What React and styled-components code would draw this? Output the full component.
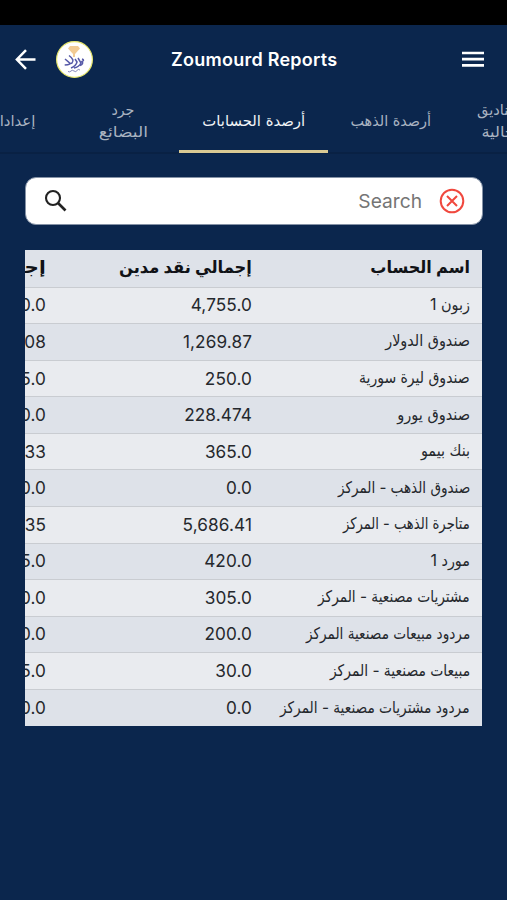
import React from "react";
import styled, { createGlobalStyle } from "styled-components";

const Global = createGlobalStyle`
  * { box-sizing: border-box; }
  body { margin: 0; background: #0b264d; }
`;

const arabic = `"DejaVu Sans Condensed", "DejaVu Sans", sans-serif`;

const Screen = styled.main`
  width: 507px;
  height: 900px;
  overflow: hidden;
  background: #0b264d;
  font-family: Inter, ${arabic};
`;
const StatusBar = styled.div`
  height: 25px;
  background: #000;
`;
const AppBar = styled.header`
  height: 69px;
  display: grid;
  grid-template-columns: 56px 37px 1fr 56px;
  align-items: center;
  color: #fff;
`;
const IconButton = styled.button`
  display: flex;
  justify-content: ${(p) => p.$justify || "center"};
  padding: 0 ${(p) => p.$end || 0}px 0 ${(p) => p.$start || 0}px;
  border: 0;
  background: none;
  color: inherit;
`;
const Logo = styled.svg`
  display: block;
  width: 37px;
  height: 37px;
`;
const Title = styled.h1`
  margin: 0;
  padding-left: 78px;
  font-size: 18px;
  font-weight: 600;
  letter-spacing: 0.25px;
  white-space: nowrap;
`;
const TabBar = styled.nav`
  direction: rtl;
  display: flex;
  height: 60px;
  margin-right: -46px;
  border-bottom: 2px solid #092144;
`;
const Tab = styled.button`
  flex: none;
  width: ${(p) => p.$width}px;
  height: 59px;
  padding: 0 0 3px;
  border: 0;
  border-bottom: 3px solid ${(p) => (p.$active ? "#d9c993" : "transparent")};
  background: none;
  color: ${(p) => (p.$active ? "#f2f4f7" : "#a9b3c1")};
  font: ${(p) => (p.$active ? 500 : 400)} 15px/22px ${arabic};
  white-space: nowrap;
`;
const Label = styled.span`
  display: inline-block;
  transform: scaleX(${(p) => p.$fit || 1});
  transform-origin: ${(p) => p.$origin || "right"} center;
`;
const SearchBox = styled.div`
  direction: rtl;
  display: flex;
  align-items: center;
  width: 458px;
  height: 48px;
  margin: 23px 0 25px 25px;
  padding: 0 17px 0 18px;
  border: 1px solid #8592a6;
  border-radius: 11px;
  background: #fff;
`;
const Placeholder = styled.span`
  flex: 1;
  padding-right: 17px;
  color: #757575;
  font-size: 19.2px;
`;
const Table = styled.section`
  direction: rtl;
  width: 457px;
  margin-left: 25px;
  overflow: hidden;
  color: #25282d;
`;
const Row = styled.div`
  display: grid;
  grid-template-columns: 218px 206px 206px;
  align-items: center;
  height: ${(p) => (p.$head ? 37.6 : 36.57)}px;
  border-bottom: 1px solid #c9ccd1;
  background: ${(p) => (p.$shaded ? "#dee2e9" : "#e9ebef")};
  &:last-child { border-bottom: 0; }
`;
const Cell = styled.div`
  padding: 0 12px 3px;
  white-space: nowrap;
  font: ${(p) => (p.$head ? 700 : 400)} ${(p) => (p.$head ? 17 : 16)}px/24px Inter, ${arabic};
  color: ${(p) => (p.$head ? "#101216" : "inherit")};
`;
const Amount = styled.div`
  padding: 0 12px;
  font-size: 17.2px;
  line-height: 24px;
  letter-spacing: 0.1px;
  white-space: nowrap;
`;

const tabs = [
  { lines: [["الصناديق", 1.08], ["الحالية", 1.2]], width: 100 },
  { lines: [["أرصدة الذهب", 1.067]], width: 125 },
  { lines: [["أرصدة الحسابات", 1.1]], width: 149, active: true },
  { lines: [["جرد", 1.05], ["البضائع", 1.27]], width: 112 },
  { lines: [["إعدادات", 1.1]], width: 112 },
];

const headings = [
  ["اسم الحساب", 1.05],
  ["إجمالي نقد مدين", 1.064],
  ["إجمالي نقد دائن", 1.3],
];

const rows = [
  ["زبون 1", "4,755.0", "0.0", 1],
  ["صندوق الدولار", "1,269.87", "08", 1],
  ["صندوق ليرة سورية", "250.0", "5.0", 0.974],
  ["صندوق يورو", "228.474", "0.0", 1.01],
  ["بنك بيمو", "365.0", "33", 1],
  ["صندوق الذهب - المركز", "0.0", "0.0", 0.943],
  ["متاجرة الذهب - المركز", "5,686.41", "35", 0.914],
  ["مورد 1", "420.0", "5.0", 1],
  ["مشتريات مصنعية - المركز", "305.0", "0.0", 0.956],
  ["مردود مبيعات مصنعية المركز", "200.0", "0.0", 0.948],
  ["مبيعات مصنعية - المركز", "30.0", "5.0", 0.966],
  ["مردود مشتريات مصنعية - المركز", "0.0", "0.0", 0.955],
];

export default function App() {
  return (
    <Screen>
      <Global />
      <StatusBar />
      <AppBar>
        <IconButton $justify="flex-start" $start={15} aria-label="Back">
          <svg width="21" height="21" viewBox="0 0 21 21" fill="none" stroke="currentColor" strokeWidth="2.5">
            <path d="M11 1.2 1.9 10.5 11 19.8M2 10.5h18.5" />
          </svg>
        </IconButton>
        <Logo viewBox="0 0 37 37" fill="none">
          <circle cx="18.5" cy="18.5" r="17.9" fill="#fff" stroke="#e6e56a" strokeWidth="1.2" />
          <path d="m12 7.5 2-2.5h8l2 2.5-5 5.5v3h-2v-3z" fill="#f2cb94" />
          <path d="m9 18 4 3.3q3 2.1-4.3 2.7M13 14.5q6 4.5 3 7.5l-3 1M19 18l2 3q-1 4-6 6M22 17l3 5q-2 4-7 5M26 18q3 1 0 2.5 2 2.5-2 4" stroke="#5659a8" strokeWidth="1.5" />
          <path d="M12 30.5q2 1 3-.5t3 0 3-.5 3-.5" stroke="#8889bd" strokeWidth="1" />
        </Logo>
        <Title>Zoumourd Reports</Title>
        <IconButton $justify="flex-end" $end={23} aria-label="Menu">
          <svg width="22" height="17" viewBox="0 0 22 17" stroke="currentColor" strokeWidth="2.7">
            <path d="M0 2h22M0 8.2h22M0 14.4h22" />
          </svg>
        </IconButton>
      </AppBar>
      <TabBar>
        {tabs.map((t) => (
          <Tab key={t.lines[0][0]} $width={t.width} $active={t.active}>
            {t.lines.map(([text, fit], i) => (
              <React.Fragment key={text}>
                {i > 0 && <br />}
                <Label $origin="center" $fit={fit}>{text}</Label>
              </React.Fragment>
            ))}
          </Tab>
        ))}
      </TabBar>
      <SearchBox>
        <svg width="26" height="26" viewBox="0 0 26 26" fill="none" stroke="#f0483e" strokeWidth="2">
          <circle cx="13" cy="13" r="11.3" />
          <path d="m8 8 10 10M18 8 8 18" />
        </svg>
        <Placeholder>Search</Placeholder>
        <svg width="24" height="24" viewBox="0 0 24 24" fill="none" stroke="#222" strokeWidth="2.1">
          <circle cx="9" cy="9" r="7" />
          <path d="m14 14 7.5 7.5" strokeWidth="2.7" />
        </svg>
      </SearchBox>
      <Table>
        <Row $head $shaded>
          {headings.map(([text, fit]) => (
            <Cell key={text} $head><Label $fit={fit}>{text}</Label></Cell>
          ))}
        </Row>
        {rows.map(([name, debit, credit, fit], i) => (
          <Row key={name} $shaded={i % 2 === 1}>
            <Cell><Label $fit={fit}>{name}</Label></Cell>
            <Amount>{debit}</Amount>
            <Amount>{credit}</Amount>
          </Row>
        ))}
      </Table>
    </Screen>
  );
}
